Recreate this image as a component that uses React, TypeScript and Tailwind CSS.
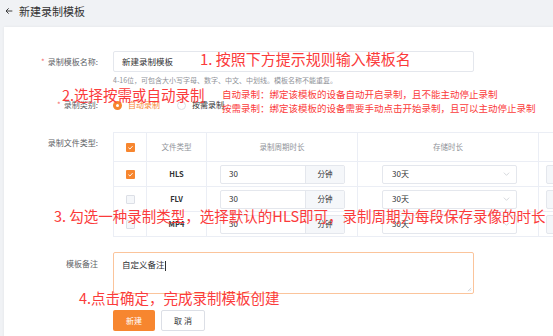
import React from "react";

const ORANGE = "bg-[#f7862f]";

const Check = ({ on }: { on: boolean }) =>
  on ? (
    <span className={`inline-flex w-[9px] h-[9px] items-center justify-center rounded-[1px] ${ORANGE}`}>
      <svg viewBox="0 0 10 10" className="w-[7px] h-[7px]">
        <path d="M2 5.2 L4.2 7.2 L8 3" fill="none" stroke="#fff" strokeWidth="1.3" />
      </svg>
    </span>
  ) : (
    <span className="inline-block w-[9px] h-[9px] rounded-[1px] border border-[#dcdfe6] bg-[#f5f7fa]" />
  );

const rows = [
  { on: true, type: "HLS" },
  { on: false, type: "FLV" },
  { on: false, type: "MP4" },
];

const App: React.FC = () => {
  return (
    <div className="relative w-[553px] h-[336px] overflow-hidden bg-[#f0f2f5] font-['Noto_Sans_CJK_SC',sans-serif] text-[#303133]">
      {/* Page header */}
      <div className="h-[22px] flex items-center pl-[5px] gap-[6px]">
        <svg viewBox="0 0 12 12" className="w-[8px] h-[8px]">
          <path d="M11 6 H1.5 M5.5 2 L1.5 6 L5.5 10" fill="none" stroke="#333" strokeWidth="1.4" />
        </svg>
        <span className="text-[11px] leading-none text-[#333]">新建录制模板</span>
      </div>

      {/* Card */}
      <div className="ml-[4px] mt-[5px] h-[320px] bg-white shadow-[0_0_3px_rgba(0,0,0,0.06)] pt-[24px] text-[8px] overflow-hidden">
        {/* Template name */}
        <div className="flex items-center">
          <div className="w-[94px] shrink-0 text-right text-[#606266]">
            <span className="text-[#f56c6c] mr-[3px]">*</span>录制模板名称:
          </div>
          <div className="ml-[15px] w-[361px] h-[21px] border border-[#e4e7ed] rounded-[2px] flex items-center pl-[8px] text-[8.5px]">
            新建录制模板
          </div>
        </div>
        <div className="ml-[109px] mt-[3px] leading-[10px] text-[7px] text-[#909399]">
          4-16位，可包含大小写字母、数字、中文、中划线。模板名称不能重复。
        </div>

        {/* Record category */}
        <div className="flex items-center h-[20px] mt-[10px]">
          <div className="w-[94px] shrink-0 text-right text-[#606266]">
            <span className="text-[#f56c6c] mr-[3px]">*</span>录制类别:
          </div>
          <div className="ml-[15px] flex items-center">
            <span className={`w-[9px] h-[9px] rounded-full ${ORANGE} flex items-center justify-center`}>
              <span className="w-[3px] h-[3px] rounded-full bg-white" />
            </span>
            <span className="ml-[6px] text-[#f7862f]">自动录制</span>
            <span className="ml-[17px] w-[9px] h-[9px] rounded-full border border-[#dcdfe6] bg-white" />
            <span className="ml-[6px] text-[#303133]">按需录制</span>
          </div>
        </div>

        {/* File types table */}
        <div className="flex mt-[17px]">
          <div className="w-[94px] shrink-0 text-right text-[#606266] pt-[5px] leading-[12px]">录制文件类型:</div>
          <div className="ml-[15px] shrink-0 border-l border-t border-[#ebeef5] text-[7.5px]">
            <div className="flex h-[29px] text-[#909399]">
              <div className="w-[33px] shrink-0 border-r border-b border-[#ebeef5] flex items-center justify-center">
                <Check on />
              </div>
              <div className="w-[60px] shrink-0 border-r border-b border-[#ebeef5] flex items-center justify-center">文件类型</div>
              <div className="w-[151px] shrink-0 border-r border-b border-[#ebeef5] flex items-center justify-center">录制周期时长</div>
              <div className="w-[181px] shrink-0 border-r border-b border-[#ebeef5] flex items-center justify-center">存储时长</div>
              <div className="w-[80px] shrink-0 border-b border-[#ebeef5]" />
            </div>
            {rows.map((r) => (
              <div key={r.type} className="flex h-[25px]">
                <div className="w-[33px] shrink-0 border-r border-b border-[#ebeef5] flex items-center justify-center">
                  <Check on={r.on} />
                </div>
                <div className="w-[60px] shrink-0 border-r border-b border-[#ebeef5] flex items-center justify-center font-bold text-[#303133]">
                  {r.type}
                </div>
                <div className="w-[151px] shrink-0 border-r border-b border-[#ebeef5] flex items-center pl-[13px]">
                  <div className="flex w-[125px] h-[19px] border border-[#e4e7ed] rounded-[2px] overflow-hidden">
                    <div className="flex-1 flex items-center pl-[8px] text-[8px]">30</div>
                    <div className="w-[39px] bg-[#f5f7fa] border-l border-[#e4e7ed] flex items-center justify-center">分钟</div>
                  </div>
                </div>
                <div className="w-[181px] shrink-0 border-r border-b border-[#ebeef5] flex items-center pl-[24px]">
                  <div className="flex w-[135px] h-[19px] border border-[#e4e7ed] rounded-[2px] items-center pl-[9px] pr-[6px] justify-between">
                    <span className="text-[8px]">30天</span>
                    <svg viewBox="0 0 10 6" className="w-[7px] h-[4px]">
                      <path d="M1 1 L5 5 L9 1" fill="none" stroke="#c0c4cc" strokeWidth="1" />
                    </svg>
                  </div>
                </div>
                <div className="w-[80px] shrink-0 border-b border-[#ebeef5] flex items-center pl-[7px]">
                  <div className="w-[40px] h-[19px] border border-[#e4e7ed] bg-[#f5f7fa] rounded-[2px]" />
                </div>
              </div>
            ))}
          </div>
        </div>

        {/* Remark */}
        <div className="flex mt-[15px]">
          <div className="w-[94px] shrink-0 text-right text-[#606266] pt-[6px] leading-[12px]">模板备注</div>
          <div className="relative ml-[15px] w-[361px] h-[42px] border border-[#fbc49b] rounded-[2px] pl-[8px] pt-[5px] text-[8.5px] leading-[12px]">
            自定义备注<span className="inline-block w-px h-[10px] bg-[#303133] align-middle" />
            <svg viewBox="0 0 6 6" className="absolute right-[1px] bottom-[1px] w-[5px] h-[5px]">
              <path d="M5 1 L1 5 M5 3 L3 5" stroke="#c0c4cc" strokeWidth="0.8" />
            </svg>
          </div>
        </div>

        {/* Actions */}
        <div className="flex ml-[109px] mt-[16px] gap-[6px]">
          <button className={`w-[42px] h-[21px] rounded-[2px] ${ORANGE} text-white text-[8px]`}>新建</button>
          <button className="w-[44px] h-[21px] rounded-[2px] border border-[#dcdfe6] bg-white text-[#303133] text-[8px]">
            取 消
          </button>
        </div>
      </div>

      {/* Red guide annotations laid over the page */}
      <div className="absolute left-[200px] top-[51px] text-[15px] leading-none text-[#fb3b3b]">
        1. 按照下方提示规则输入模板名
      </div>
      <div className="absolute left-[62px] top-[88px] text-[14.5px] leading-none text-[#fb3b3b]">
        2.选择按需或自动录制
      </div>
      <div className="absolute left-[222px] top-[90px] text-[9.5px] leading-none text-[#fb3b3b]">
        自动录制：绑定该模板的设备自动开启录制，且不能主动停止录制
      </div>
      <div className="absolute left-[222px] top-[104px] text-[9.5px] leading-none text-[#fb3b3b]">
        按需录制：绑定该模板的设备需要手动点击开始录制，且可以主动停止录制
      </div>
      <div className="absolute left-[54px] top-[209px] text-[14.5px] leading-none text-[#fb3b3b]">
        3. 勾选一种录制类型，选择默认的HLS即可，录制周期为每段保存录像的时长
      </div>
      <div className="absolute left-[79px] top-[291px] text-[14.5px] leading-none text-[#fb3b3b]">
        4.点击确定，完成录制模板创建
      </div>
    </div>
  );
};

export default App;
